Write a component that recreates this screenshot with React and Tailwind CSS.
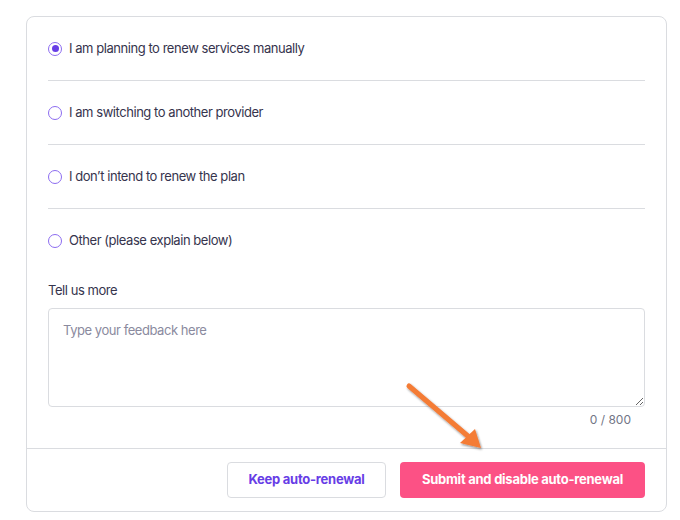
import React, { useState } from 'react';

const reasons = [
    'I am planning to renew services manually',
    'I am switching to another provider',
    'I don\u2019t intend to renew the plan',
    'Other (please explain below)',
];

const App = () => {
    const [selected, setSelected] = useState(0);
    const [text, setText] = useState('');

    return (
        <div className="relative min-h-[520px] w-[680px] bg-white pl-[26px] pt-[16px] font-['Inter',sans-serif] text-[13px] tracking-[-0.45px] text-[#36344d]">
            <div className="w-[641px] rounded-lg border border-[#dadce0] bg-white">
                <div className="px-[21px]">
                    {reasons.map((r, i) => (
                        <label
                            key={i}
                            className={`flex h-16 cursor-pointer items-center gap-[7px] ${i < reasons.length - 1 ? 'border-b border-[#dadce0]' : ''}`}
                        >
                            <span className="flex h-[14px] w-[14px] items-center justify-center rounded-full border-[1.5px] border-[#8c6cf0]">
                                {selected === i && <span className="h-[7px] w-[7px] rounded-full bg-[#673de6]" />}
                            </span>
                            <input type="radio" className="hidden" checked={selected === i} onChange={() => setSelected(i)} />
                            <span>{r}</span>
                        </label>
                    ))}

                    <div className="mt-[9px] mb-[10px] leading-4">Tell us more</div>
                    <textarea
                        value={text}
                        onChange={(e) => setText(e.target.value.slice(0, 800))}
                        placeholder="Type your feedback here"
                        className="block h-[99px] w-full resize-y rounded-[4px] border border-[#dadce0] px-[14px] py-[12px] text-[13px] tracking-[-0.45px] text-[#36344d] outline-none placeholder:text-[#8a8a9e]"
                    />
                    <div className="pt-[5px] pr-[14px] text-right text-[12px] leading-4 tracking-normal text-[#727586]">{text.length} / 800</div>
                </div>

                <div className="mt-[20px] flex justify-end gap-[14px] border-t border-[#dadce0] px-[21px] py-[13px]">
                    <button className="h-9 w-[159px] rounded-[4px] border border-[#dadce0] bg-white text-[13px] font-bold tracking-[-0.25px] text-[#673de6]">
                        Keep auto-renewal
                    </button>
                    <button className="h-9 w-[245px] rounded-[4px] bg-[#fc5185] text-[13px] font-bold tracking-[-0.25px] text-white">
                        Submit and disable auto-renewal
                    </button>
                </div>
            </div>

            {/* annotation arrow */}
            <svg className="pointer-events-none absolute left-[398px] top-[376px]" width="96" height="84" viewBox="0 0 96 84">
                <defs>
                    <filter id="sh" x="-20%" y="-20%" width="140%" height="140%">
                        <feDropShadow dx="1" dy="1.5" stdDeviation="1.2" floodColor="#000" floodOpacity="0.45" />
                    </filter>
                </defs>
                <g filter="url(#sh)">
                    <line x1="11" y1="10" x2="71" y2="61" stroke="#f47b36" strokeWidth="5" strokeLinecap="round" />
                    <polygon points="83,72 62,67 77,53" fill="#f47b36" />
                </g>
            </svg>
        </div>
    );
};

export default App;
